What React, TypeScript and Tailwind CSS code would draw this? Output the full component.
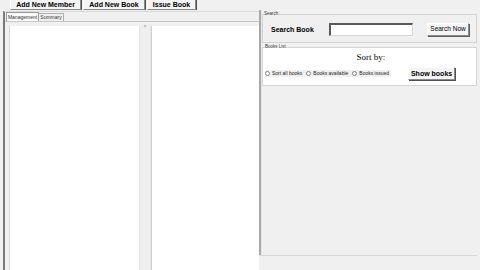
import React from "react";

const Btn = ({ children, className = "" }: { children: React.ReactNode; className?: string }) => (
  <div
    className={`flex items-center justify-center bg-[#f4f4f4] border-t border-l border-t-white border-l-white border-r border-b border-r-[#8a8a8a] border-b-[#8a8a8a] shadow-[1px_1px_0_#505050] font-bold text-[7px] leading-none text-black ${className}`}
  >
    {children}
  </div>
);

const Radio = ({ label }: { label: string }) => (
  <div className="flex items-center gap-[2px]">
    <div className="w-[5px] h-[5px] rounded-full border border-[#808080] bg-white" />
    <span className="text-[5px] leading-none text-[#222]">{label}</span>
  </div>
);

export default function App() {
  return (
    <div className="w-[480px] h-[270px] bg-[#f0f0f0] overflow-hidden flex flex-col font-['Liberation_Sans',Arial,sans-serif] text-black">
      {/* top toolbar */}
      <div className="h-[10px] flex items-end pl-[10px] gap-[2px] overflow-hidden shrink-0">
        <Btn className="w-[71px] h-[12px]">Add New Member</Btn>
        <Btn className="w-[62px] h-[12px]">Add New Book</Btn>
        <Btn className="w-[49px] h-[12px]">Issue Book</Btn>
      </div>

      <div className="flex-1 flex min-h-0">
        {/* left */}
        <div className="w-[259px] pl-[3px] pt-[1px] flex flex-col shrink-0">
          <div className="flex-1 flex flex-col border-l-2 border-l-[#7a7a7a] border-t border-t-[#d8d8d8] min-h-0">
            <div className="h-[9px] flex items-end pl-[1px] shrink-0">
              <div className="h-[9px] w-[33px] bg-[#fafafa] border border-[#9a9a9a] border-b-0 flex items-center justify-center text-[5px] leading-none text-[#333]">
                Management
              </div>
              <div className="h-[8px] w-[25px] bg-[#f0f0f0] border border-l-0 border-[#b0b0b0] border-b-0 flex items-center justify-center text-[5px] leading-none text-[#333]">
                Summary
              </div>
            </div>
            <div className="flex-1 flex border-t border-t-[#c8c8c8] pt-[4px] pl-[4px] min-h-0">
              <div className="w-[130px] bg-white border-l border-[#d8d8d8]" />
              <div className="w-[12px] flex justify-center border-l border-r border-[#e4e4e4] bg-[#efefef]">
                <span className="text-[5px] leading-none text-[#666] mt-[-1px]">^</span>
              </div>
              <div className="flex-1 bg-white border-l border-[#d0d0d0]" />
            </div>
          </div>
        </div>

        {/* splitter */}
        <div className="w-[3px] flex flex-col shrink-0">
          <div className="flex-1 border-l-2 border-l-[#a8a8a8] bg-[#e8e8e8]" />
          <div className="h-[15px]" />
        </div>

        {/* right */}
        <div className="flex-1 flex flex-col pt-[2px] pr-[3px] min-h-0">
          <fieldset className="h-[31px] border border-[#d4d4d4] px-[8px]">
            <legend className="text-[4.5px] leading-none text-[#333] px-0 ml-[-7px]">Search</legend>
            <div className="flex items-center w-full mt-[6px] h-[13px]">
              <span className="font-bold text-[7px] leading-none">Search Book</span>
              <div className="ml-[15px] w-[84px] h-[13px] bg-white border-t-2 border-l-2 border-t-[#5a5a5a] border-l-[#5a5a5a] border-b border-r border-b-[#d8d8d8] border-r-[#d8d8d8]" />
              <div className="ml-auto w-[42px] h-[13px] flex items-center justify-center bg-[#f6f6f6] border border-t-white border-l-white border-r-[#8a8a8a] border-b-[#8a8a8a] shadow-[1px_1px_0_#606060] text-[6.5px] leading-none mr-[-1px]">
                Search Now
              </div>
            </div>
          </fieldset>
          <fieldset className="mt-[2px] h-[41px] border border-[#d4d4d4] bg-white px-[2px]">
            <legend className="text-[4.5px] leading-none text-[#333] px-0">Books List</legend>
            <div className="flex flex-col">
              <div className="text-center font-['Liberation_Serif',serif] text-[9px] leading-none mt-[3px] pl-[3px]">Sort by:</div>
              <div className="flex items-center mt-[5px] h-[13px]">
                <div className="flex items-center gap-[4px] bg-[#f0f0f0] py-[1px] pr-[2px]">
                  <Radio label="Sort all books" />
                  <Radio label="Books available" />
                  <Radio label="Books issued" />
                </div>
                <Btn className="ml-[17px] w-[47px] h-[13px]">Show books</Btn>
              </div>
            </div>
          </fieldset>
          <div className="flex-1" />
          <div className="h-[15px] border-t border-t-[#d8d8d8] ml-[-2px]" />
        </div>
      </div>
    </div>
  );
}
